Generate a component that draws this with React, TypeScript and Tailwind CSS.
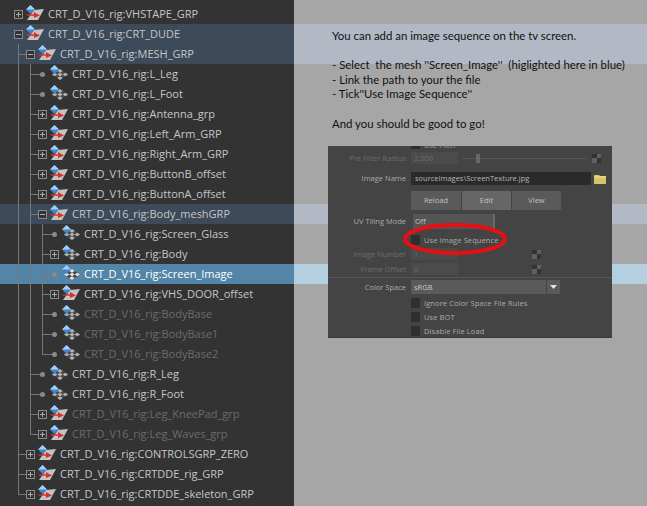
type Kind = 'group' | 'mesh';

type TreeRow = {
  name: string;
  level: number;
  kind: Kind;
  expander: 'plus' | 'minus' | 'dot';
  tone?: 'band' | 'selected';
  dim?: boolean;
  // guides: one entry per ancestor level, full line, half line (last child) or nothing
  guides: ('full' | 'half' | 'none')[];
};

const rows: TreeRow[] = [
  { name: 'VHSTAPE_GRP', level: 0, kind: 'group', expander: 'plus', guides: [] },
  { name: 'CRT_DUDE', level: 0, kind: 'group', expander: 'minus', tone: 'band', guides: [] },
  { name: 'MESH_GRP', level: 1, kind: 'group', expander: 'minus', tone: 'band', guides: ['full'] },
  { name: 'L_Leg', level: 2, kind: 'mesh', expander: 'dot', guides: ['full', 'full'] },
  { name: 'L_Foot', level: 2, kind: 'mesh', expander: 'dot', guides: ['full', 'full'] },
  { name: 'Antenna_grp', level: 2, kind: 'group', expander: 'plus', guides: ['full', 'full'] },
  { name: 'Left_Arm_GRP', level: 2, kind: 'group', expander: 'plus', guides: ['full', 'full'] },
  { name: 'Right_Arm_GRP', level: 2, kind: 'group', expander: 'plus', guides: ['full', 'full'] },
  { name: 'ButtonB_offset', level: 2, kind: 'group', expander: 'plus', guides: ['full', 'full'] },
  { name: 'ButtonA_offset', level: 2, kind: 'group', expander: 'plus', guides: ['full', 'full'] },
  { name: 'Body_meshGRP', level: 2, kind: 'group', expander: 'minus', tone: 'band', guides: ['full', 'full'] },
  { name: 'Screen_Glass', level: 3, kind: 'mesh', expander: 'dot', guides: ['full', 'full', 'full'] },
  { name: 'Body', level: 3, kind: 'mesh', expander: 'plus', guides: ['full', 'full', 'full'] },
  { name: 'Screen_Image', level: 3, kind: 'mesh', expander: 'dot', tone: 'selected', guides: ['full', 'full', 'full'] },
  { name: 'VHS_DOOR_offset', level: 3, kind: 'group', expander: 'plus', guides: ['full', 'full', 'full'] },
  { name: 'BodyBase', level: 3, kind: 'mesh', expander: 'dot', dim: true, guides: ['full', 'full', 'full'] },
  { name: 'BodyBase1', level: 3, kind: 'mesh', expander: 'dot', dim: true, guides: ['full', 'full', 'full'] },
  { name: 'BodyBase2', level: 3, kind: 'mesh', expander: 'dot', dim: true, guides: ['full', 'full', 'half'] },
  { name: 'R_Leg', level: 2, kind: 'mesh', expander: 'dot', guides: ['full', 'full'] },
  { name: 'R_Foot', level: 2, kind: 'mesh', expander: 'dot', guides: ['full', 'full'] },
  { name: 'Leg_KneePad_grp', level: 2, kind: 'group', expander: 'plus', dim: true, guides: ['full', 'full'] },
  { name: 'Leg_Waves_grp', level: 2, kind: 'group', expander: 'plus', dim: true, guides: ['full', 'half'] },
  { name: 'CONTROLSGRP_ZERO', level: 1, kind: 'group', expander: 'plus', guides: ['full'] },
  { name: 'CRTDDE_rig_GRP', level: 1, kind: 'group', expander: 'plus', guides: ['full'] },
  { name: 'CRTDDE_skeleton_GRP', level: 1, kind: 'group', expander: 'plus', guides: ['half'] },
];

function NodeIcon({ kind, selected }: { kind: Kind; selected: boolean }) {
  const light = selected ? '#e4e4e4' : '#b4b4b4';
  return (
    <svg width="20" height="20" viewBox="0 0 20 20" className="shrink-0">
      {kind === 'group' ? (
        <>
          <polygon points="9,6 19,5 13,16 2,16" fill="#c4c4c4" />
          <polygon points="5.5,1 10,5.5 5.5,10 1,5.5" fill="#3f86cf" />
          <polygon points="5.5,1 10,5.5 5.5,5.5 1,5.5" fill="#a5cff2" />
          <path d="M2 11 L10 11" stroke="#d8322c" strokeWidth="1.5" />
          <polygon points="9,8 15,11.5 9,14" fill="#d8322c" />
        </>
      ) : (
        <>
          <polygon points="11,5 19,10.5 11,16 3,10.5" fill="#4a4a4a" />
          <polygon points="11,5 13.7,6.9 11,8.7 8.3,6.9" fill={light} />
          <polygon points="11,8.7 13.7,10.5 11,12.3 8.3,10.5" fill={light} />
          <polygon points="11,12.3 13.7,14.1 11,16 8.3,14.1" fill={light} />
          <polygon points="5.7,8.7 8.3,10.5 5.7,12.3 3,10.5" fill={light} />
          <polygon points="16.3,8.7 19,10.5 16.3,12.3 13.7,10.5" fill={light} />
          <polygon points="5.5,1 10,5.5 5.5,10 1,5.5" fill="#3f86cf" />
          <polygon points="5.5,1 10,5.5 5.5,5.5 1,5.5" fill="#a5cff2" />
        </>
      )}
    </svg>
  );
}

function Guide({ type }: { type: 'full' | 'half' | 'none' }) {
  return (
    <div className="relative h-5 w-3 shrink-0">
      {type !== 'none' && (
        <div className={`absolute left-[6px] top-0 w-px bg-[#777] ${type === 'full' ? 'h-5' : 'h-[10px]'}`} />
      )}
    </div>
  );
}

function Expander({ type, nested }: { type: TreeRow['expander']; nested: boolean }) {
  return (
    <div className="relative flex h-5 w-3 shrink-0 items-center justify-center">
      {nested && <div className="absolute left-[-6px] top-[10px] h-px w-3 bg-[#777]" />}
      {type === 'dot' ? (
        <div className="relative h-[5px] w-[5px] rounded-full bg-[#8a8a8a]" />
      ) : (
        <div className="relative ml-px h-[9px] w-[9px] border border-[#8a8a8a] bg-[#333]">
          <div className="absolute left-px top-[3px] h-px w-[5px] bg-[#aaa]" />
          {type === 'plus' && <div className="absolute left-[3px] top-px h-[5px] w-px bg-[#aaa]" />}
        </div>
      )}
    </div>
  );
}

function OutlinerRow({ row }: { row: TreeRow }) {
  const bg =
    row.tone === 'band' ? 'bg-[#3d4a5a]' : row.tone === 'selected' ? 'bg-[#5285a7]' : '';
  const text = row.tone === 'selected' ? 'text-white' : row.dim ? 'text-[#6b6b6b]' : 'text-[#c6c6c6]';
  return (
    <div className={`flex h-5 items-center pl-3 ${bg}`}>
      {row.guides.map((g, i) => (
        <Guide key={i} type={g} />
      ))}
      <Expander type={row.expander} nested={row.level > 0} />
      <div className="ml-[1px]">
        <NodeIcon kind={row.kind} selected={row.tone === 'selected'} />
      </div>
      <span className={`ml-[3px] whitespace-nowrap text-[11px] ${text}`}>
        CRT_D_V16_rig:{row.name}
      </span>
    </div>
  );
}

function Checker() {
  return (
    <div className="grid h-[9px] w-[9px] grid-cols-2 grid-rows-2">
      <div className="bg-[#333]" />
      <div className="bg-[#606060]" />
      <div className="bg-[#606060]" />
      <div className="bg-[#333]" />
    </div>
  );
}

function Label({ text, dim }: { text: string; dim?: boolean }) {
  return (
    <div className={`w-[78px] shrink-0 whitespace-nowrap text-right text-[7.5px] ${dim ? 'text-[#6d6d6d]' : 'text-[#ababab]'}`}>
      {text}
    </div>
  );
}

function CheckRow({ text, className }: { text: string; className: string }) {
  return (
    <div className={`flex items-center pl-[83px] ${className}`}>
      <div className="h-[10px] w-[9px] bg-[#2f2f2f]" />
      <span className="ml-[4px] whitespace-nowrap text-[7.5px] tracking-[0.1px] text-[#aaa]">{text}</span>
    </div>
  );
}

function DimField({ label, value }: { label: string; value: string }) {
  return (
    <div className="flex h-3 items-center">
      <Label text={label} dim />
      <div className="ml-[5px] flex h-3 w-[47px] items-center bg-[#4b4b4b] pl-[3px] text-[7.5px] text-[#6d6d6d]">{value}</div>
    </div>
  );
}

function AttributePanel() {
  return (
    <div className="relative flex h-[192px] w-[284px] flex-col overflow-hidden border-b border-[#3a3a3a] bg-[#444] font-['Open_Sans',sans-serif] tracking-normal">
      <div className="flex h-[3px] items-end overflow-hidden pl-[83px]">
        <div className="h-[3px] w-[9px] shrink-0 bg-[#2f2f2f]" />
        <span className="ml-[4px] whitespace-nowrap text-[7.5px] leading-[8px] text-[#999]">Use Filter</span>
      </div>

      <div className="mt-[3px] flex h-3 items-center">
        <Label text="Pre Filter Radius" dim />
        <div className="ml-[5px] flex h-3 w-[47px] items-center bg-[#4b4b4b] pl-[3px] text-[7.5px] text-[#6d6d6d]">2.000</div>
        <div className="relative ml-[4px] h-px w-[125px] bg-[#555]">
          <div className="absolute left-[14px] top-[-4px] h-[9px] w-[4px] bg-[#686868]" />
        </div>
        <div className="ml-[5px]">
          <Checker />
        </div>
      </div>

      <div className="mt-[8px] flex h-[13px] items-center">
        <Label text="Image Name" />
        <div className="ml-[5px] flex h-[13px] w-[180px] items-center bg-[#2a2a2a] pl-[4px] text-[7.5px] text-[#b5b5b5]">
          sourceimages\ScreenTexture.jpg
        </div>
        <svg width="12" height="10" viewBox="0 0 12 10" className="ml-[3px]">
          <path d="M0 1h5l1 1h6v8H0z" fill="#d9c46a" />
          <path d="M0 3h12" stroke="#f0e29a" />
        </svg>
      </div>

      <div className="mt-[6px] flex h-[19px] gap-px pl-[83px] text-[7.5px] text-[#c0c0c0]">
        <div className="flex w-[50px] items-center justify-center bg-[#5a5a5a]">Reload</div>
        <div className="flex w-[49px] items-center justify-center bg-[#666]">Edit</div>
        <div className="flex w-[49px] items-center justify-center bg-[#5a5a5a]">View</div>
      </div>

      <div className="mt-[4px] flex h-[15px] items-center">
        <Label text="UV Tiling Mode" />
        <div className="ml-[7px] flex h-[15px] w-[82px] items-center border-r-2 border-[#6a6a6a] bg-[#555] pl-[2px] text-[7.5px] text-[#c0c0c0]">
          Off
        </div>
      </div>

      <CheckRow text="Use Image Sequence" className="mt-[6px] h-[10px]" />

      <div className="mt-[3px] flex items-center">
        <DimField label="Image Number" value="1" />
        <div className="ml-[74px]">
          <Checker />
        </div>
      </div>
      <div className="mt-[3px] flex items-center">
        <DimField label="Frame Offset" value="0" />
        <div className="ml-[74px]">
          <Checker />
        </div>
      </div>

      <div className="mt-[2px] h-px bg-[#555]" />

      <div className="mt-[2px] flex h-[14px] items-center">
        <Label text="Color Space" />
        <div className="ml-[5px] flex h-[14px] w-[135px] items-center bg-[#5a5a5a] pl-[3px] text-[7.5px] text-[#c8c8c8]">sRGB</div>
        <div className="ml-px flex h-[14px] w-[13px] items-center justify-center bg-[#5a5a5a]">
          <svg width="7" height="4" viewBox="0 0 7 4">
            <polygon points="0,0 7,0 3.5,4" fill="#e6e6e6" />
          </svg>
        </div>
      </div>

      <CheckRow text="Ignore Color Space File Rules" className="mt-[4px] h-[10px]" />
      <CheckRow text="Use BOT" className="mt-[4px] h-[10px]" />
      <CheckRow text="Disable File Load" className="mt-[4px] h-[10px]" />

      <svg width="110" height="36" viewBox="0 0 110 36" className="absolute left-[73px] top-[76px]">
        <ellipse cx="54" cy="17" rx="50" ry="14" fill="none" stroke="#e60f14" strokeWidth="4" />
      </svg>
    </div>
  );
}

export default function App() {
  return (
    <div className="flex h-[506px] w-[647px] overflow-hidden font-['Open_Sans',sans-serif]">
      <div className="h-[506px] w-[294px] shrink-0 overflow-hidden bg-[#333] pt-1">
        {rows.map((row) => (
          <OutlinerRow key={row.name} row={row} />
        ))}
      </div>

      <div className="relative flex-1 bg-[#a6a6a6]">
        {/* selection bands carry on behind the note */}
        <div className="mt-6 h-10 bg-[#b2b9c4]" />
        <div className="mt-[140px] h-5 bg-[#b2b9c4]" />
        <div className="mt-10 h-5 bg-[#b3cfe0]" />

        <div className="absolute inset-0 pl-[38px] pt-[29px] font-['Lato',sans-serif] text-[11.4px] leading-[14.6px] text-[#111]">
          <p className="whitespace-nowrap">You can add an image sequence on the tv screen.</p>
          <p className="mt-[14.6px] whitespace-nowrap">- Select&nbsp; the mesh ''Screen_Image''&nbsp; (higlighted here in blue)</p>
          <p>- Link the path to your the file</p>
          <p>- Tick''Use Image Sequence''</p>
          <p className="mt-[14.6px]">And you should be good to go!</p>
          <div className="absolute left-[34px] top-[146px]">
            <AttributePanel />
          </div>
        </div>
      </div>
    </div>
  );
}
